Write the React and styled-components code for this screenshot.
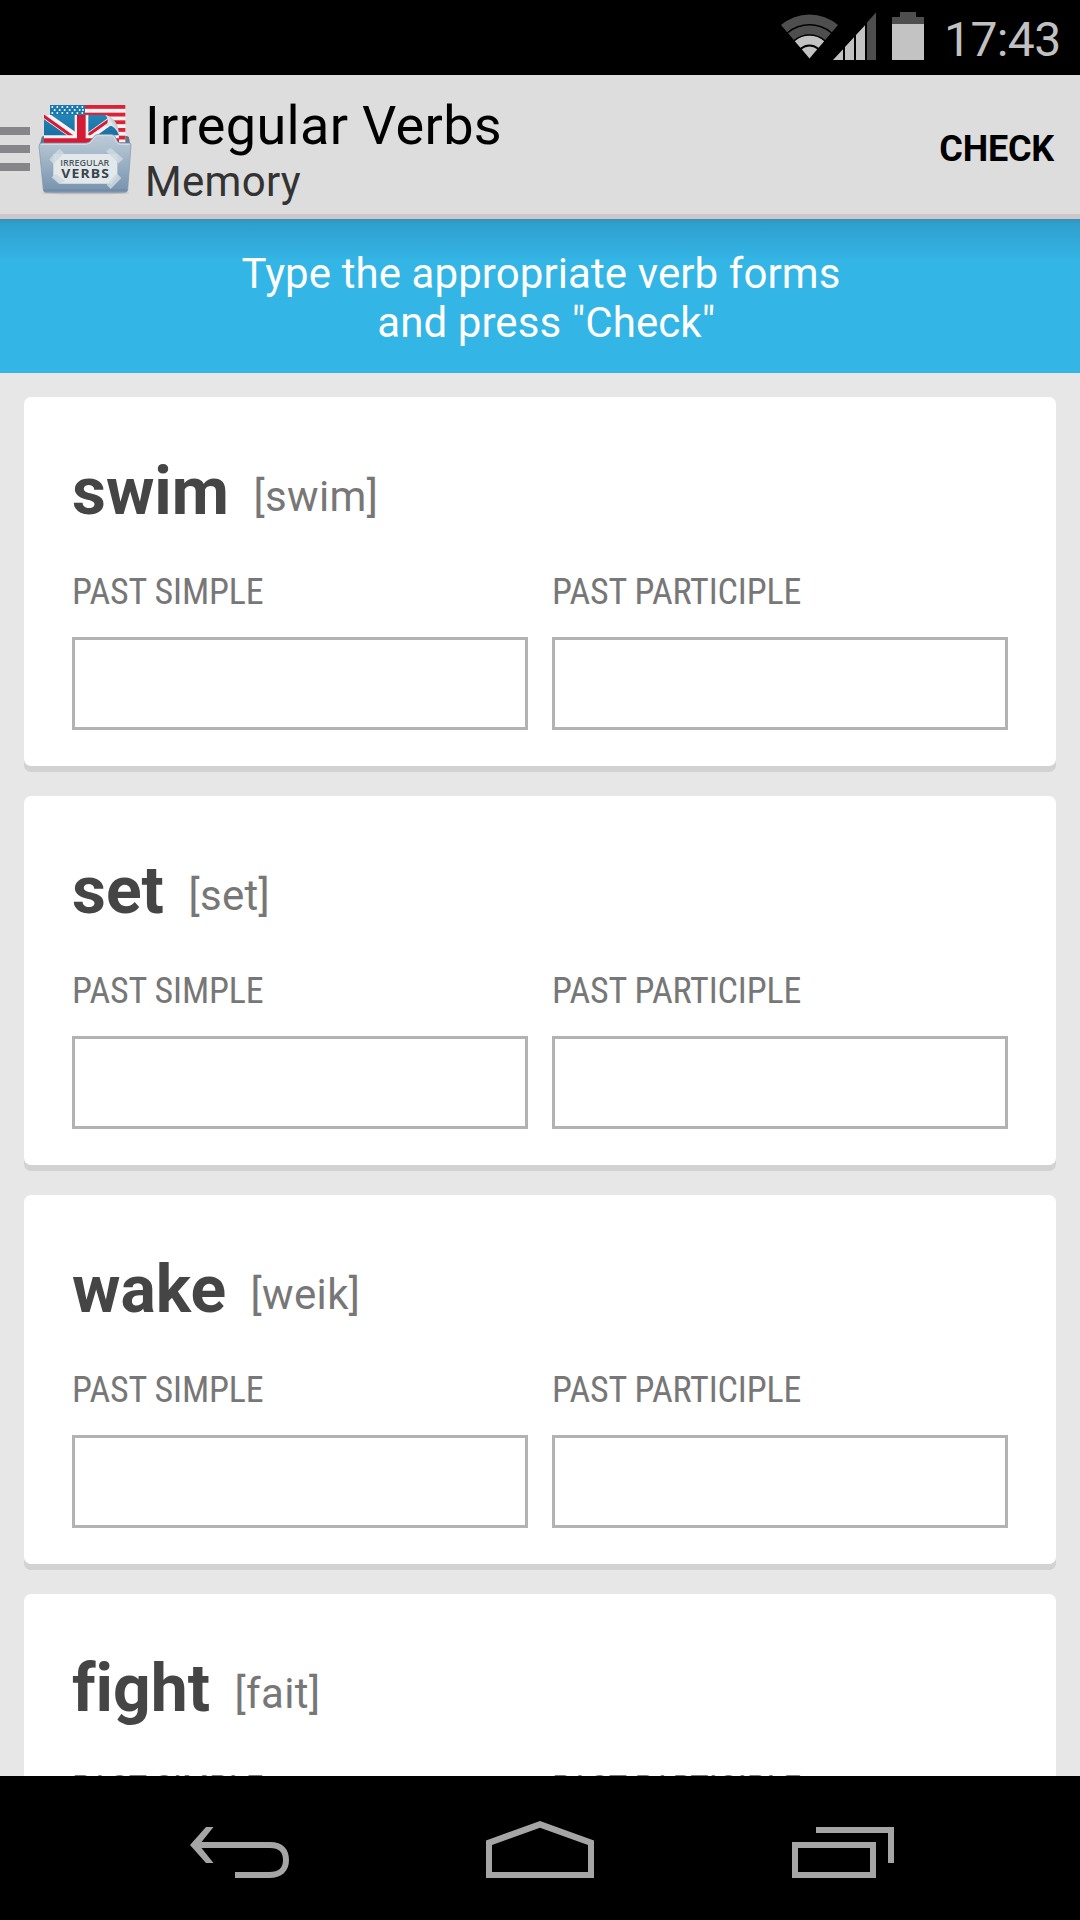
import React from "react";
import styled, { createGlobalStyle } from "styled-components";

const GlobalStyle = createGlobalStyle`
  * { box-sizing: border-box; }
  body { margin: 0; background: #000; font-family: Roboto, "Noto Sans", sans-serif; font-variant-ligatures: none; }
`;

const Screen = styled.div`
  width: 1080px;
  height: 1920px;
  display: flex;
  flex-direction: column;
  overflow: hidden;
  background: #e7e7e7;
`;

const StatusBar = styled.div`
  flex: none;
  height: 75px;
  background: #000;
  display: flex;
  justify-content: flex-end;
  padding: 12px 20px 0 0;
`;

const StatusIcons = styled.svg`
  display: block;
  width: 144px;
  height: 49px;
  margin-right: 20px;
`;

const Clock = styled.div`
  width: 116px;
  white-space: nowrap;
  font-size: 48px;
  line-height: 56px;
  color: #c1c1c1;
  letter-spacing: -0.6px;
`;

const ActionBar = styled.header`
  flex: none;
  height: 144px;
  display: flex;
  background: #dddddd;
  border-bottom: 5px solid #cbc7cb;
`;

const MenuLines = styled.div`
  width: 30px;
  padding-top: 52px;
  display: flex;
  flex-direction: column;
  gap: 10px;
`;

const MenuLine = styled.div`
  height: 8px;
  background: #86868a;
`;

const Logo = styled.svg`
  display: block;
  width: 98px;
  height: 96px;
  margin: 27px 0 0 6px;
`;

const Titles = styled.div`
  flex: 1;
  padding: 19px 0 0 11px;
`;

const Title = styled.div`
  font-size: 54px;
  line-height: 63px;
  color: #000;
  letter-spacing: 0.33px;
`;

const Subtitle = styled.div`
  font-size: 42px;
  line-height: 49px;
  color: #333;
  letter-spacing: 0.3px;
`;

const CheckButton = styled.button`
  border: 0;
  padding: 9px 26px 0 0;
  background: none;
  font: bold 36px/42px Roboto, sans-serif;
  letter-spacing: -0.2px;
  color: #000;
`;

const Banner = styled.div`
  flex: none;
  height: 154px;
  padding: 30px 0 0 2px;
  text-align: center;
  white-space: pre;
  font-size: 42px;
  line-height: 49px;
  letter-spacing: 0.09px;
  color: #fff;
  background: linear-gradient(#3a8fb0 0, #2f9fcd 4px, #31a7d7 18px, #33b5e5 42px);
`;

const CardList = styled.main`
  flex: 1;
  min-height: 0;
  overflow: hidden;
  padding: 24px 24px 0;
  display: flex;
  flex-direction: column;
  gap: 30px;
`;

const Card = styled.section`
  flex: none;
  height: 369px;
  padding: 56px 48px 0;
  background: #fff;
  border-radius: 7px;
  box-shadow: 0 6px 0 #d2d2d2;
`;

const VerbRow = styled.div`
  height: 77px;
  display: flex;
`;

const Verb = styled.div`
  font-size: 66px;
  font-weight: 700;
  line-height: 77px;
  color: #454545;
`;

const Phonetic = styled.div`
  padding: 19px 0 0 24.5px;
  font-size: 42px;
  line-height: 49px;
  letter-spacing: 0.35px;
  color: #777;
`;

const Fields = styled.div`
  display: grid;
  grid-template-columns: 1fr 1fr;
  column-gap: 24px;
  margin-top: 41px;
`;

const Field = styled.label`
  display: flex;
  flex-direction: column;
  gap: 24px;
`;

const FieldName = styled.span`
  font-family: "Roboto Condensed", Roboto, sans-serif;
  font-stretch: 75%;
  font-size: 36px;
  line-height: 42px;
  letter-spacing: -0.14px;
  color: #777;
`;

const FieldInput = styled.input`
  width: 100%;
  height: 93px;
  border: 3px solid #b2b2b2;
  border-radius: 0;
  background: #fff;
  padding: 0 12px;
  font: 42px Roboto, sans-serif;
`;

const NavBar = styled.nav`
  flex: none;
  height: 144px;
  background: #000;
  display: flex;
  justify-content: space-between;
  padding: 42px 186px 0 186px;
`;

const NavIcon = styled.svg`
  display: block;
  width: 108px;
  height: 66px;
`;

const verbs = [
  ["swim", "[swim]"],
  ["set", "[set]"],
  ["wake", "[weik]"],
  ["fight", "[fait]"],
];

function band(r1, r2) {
  const s = 0.648;
  const c = 0.762;
  const x = 809.5;
  const y = 58.5;
  return `M${x - r1 * s} ${y - r1 * c}A${r1} ${r1} 0 0 1 ${x + r1 * s} ${y - r1 * c}L${x + r2 * s} ${y - r2 * c}A${r2 || 1} ${r2 || 1} 0 0 0 ${x - r2 * s} ${y - r2 * c}Z`;
}

function AppLogo() {
  const stars = [];
  for (let r = 0; r < 3; r++)
    for (let c = 0; c < 7; c++)
      stars.push(<circle key={`${r}-${c}`} cx={157 + c * 15 + (r % 2) * 7 - (c === 6 && r % 2 ? 5 : 0)} cy={111 + r * 9} r="3" fill="#eef6fb" />);
  return (
    <Logo viewBox="108 96 294 288">
      <defs>
        <linearGradient id="front" x1="0" y1="0" x2="0" y2="1">
          <stop offset="0" stopColor="#bccbd8" />
          <stop offset=".3" stopColor="#abbccc" />
          <stop offset=".7" stopColor="#8ba4bb" />
          <stop offset="1" stopColor="#7892ad" />
        </linearGradient>
        <linearGradient id="blue" x1="0" y1="0" x2="0" y2="1">
          <stop offset="0" stopColor="#2187b8" />
          <stop offset="1" stopColor="#1b6496" />
        </linearGradient>
        <linearGradient id="curl" x1="0" y1="1" x2="1" y2="0">
          <stop offset="0" stopColor="#7d8b96" />
          <stop offset=".45" stopColor="#e9edf0" />
          <stop offset="1" stopColor="#8194a3" />
        </linearGradient>
        <clipPath id="uk"><path d="M132 134H316Q352 150 357 196V222H132Z" /></clipPath>
      </defs>
      <ellipse cx="256" cy="369" rx="132" ry="4" fill="#bdbdbd" />
      <path d="M124 206Q124 198 132 198H380Q387 198 388 208L391 226H119Z" fill="#62778e" />
      <rect x="150" y="105" width="226" height="112" fill="#f7f1f1" />
      {[0, 1, 2, 3, 4].map((i) => (
        <rect key={i} x="150" y={105 + i * 23} width="226" height="11.5" fill="#dc2237" />
      ))}
      <rect x="150" y="105" width="105" height="40" fill="#1b78ac" />
      {stars}
      <g clipPath="url(#uk)">
        <rect x="132" y="133" width="226" height="90" fill="url(#blue)" />
        <path d="M132 134L222 197M358 134L266 200" stroke="#f6f2f3" strokeWidth="23" strokeLinecap="square" />
        <path d="M132 139L214 197M362 126L262 197" stroke="#d51b33" strokeWidth="9" strokeLinecap="square" />
        <path d="M224 133H265V223H224ZM132 196H358V223H132Z" fill="#f6f2f3" />
        <path d="M231 133H257V223H231ZM132 205H358V223H132Z" fill="#d51b33" />
      </g>
      <path d="M316 134Q330 150 318 167Q345 162 357 196Q356 146 316 134Z" fill="url(#curl)" />
      <path d="M126 219H258Q268 219 274 210L281 200Q286 193 296 193H334Q343 193 346 201L352 213Q355 219 363 219H386Q394 219 393 227L383 360Q382 367 375 367H137Q131 367 130 360L117 228Q117 219 126 219Z" fill="url(#front)" stroke="#7d94aa" strokeWidth="2" />
      <path d="M122 223H260Q271 222 278 211L284 202Q288 197 297 197H332Q340 197 343 204L349 216Q353 223 362 223H389" fill="none" stroke="#d6e0e8" strokeWidth="3" />
      <path d="M131 360H382" stroke="#67819c" strokeWidth="2" />
      <path d="M160 252H352V320L334 341H182L160 320Z" fill="#e3e9eb" />
      <path d="M148 268L178 236L192 250L160 282ZM318 244L332 234L370 266L356 280ZM154 322L168 312L196 334L178 343ZM320 344L350 310L364 324L332 357Z" fill="#cdd9e0" opacity=".85" />
      <text x="181" y="288" textLength="147" lengthAdjust="spacingAndGlyphs" fontFamily="Open Sans" fontWeight="600" fontSize="25" fill="#4d565e">IRREGULAR</text>
      <text x="184" y="325" textLength="146" lengthAdjust="spacingAndGlyphs" letterSpacing="3" fontFamily="Open Sans" fontWeight="700" fontSize="38" fill="#39434d">VERBS</text>
    </Logo>
  );
}

export default function App() {
  return (
    <>
      <GlobalStyle />
      <Screen>
        <StatusBar>
          <StatusIcons viewBox="780 12 144 49">
            <path d={band(44, 34.5)} fill="#4e4e4e" />
            <path d={band(33, 24.2)} fill="#4e4e4e" />
            <path d={band(22.7, 14)} fill="#c3c3c3" />
            <path d={band(12, 0)} fill="#c3c3c3" />
            <path d="M833 60L843 49.3V60ZM845 60V47L854 37.3V60ZM856 60V35L865 25.3V60Z" fill="#c3c3c3" />
            <path d="M867 60V22.5L876 12.5V60Z" fill="#4e4e4e" />
            <path d="M900 12H916V17H924V24H892V17H900Z" fill="#4e4e4e" />
            <path d="M892 24H924V60H892Z" fill="#c3c3c3" />
          </StatusIcons>
          <Clock>17:43</Clock>
        </StatusBar>
        <ActionBar>
          <MenuLines>
            <MenuLine />
            <MenuLine />
            <MenuLine />
          </MenuLines>
          <AppLogo />
          <Titles>
            <Title>Irregular Verbs</Title>
            <Subtitle>Memory</Subtitle>
          </Titles>
          <CheckButton>CHECK</CheckButton>
        </ActionBar>
        <Banner>{'Type the appropriate verb forms\n and press "Check"'}</Banner>
        <CardList>
          {verbs.map(([verb, sound]) => (
            <Card key={verb}>
              <VerbRow>
                <Verb>{verb}</Verb>
                <Phonetic>{sound}</Phonetic>
              </VerbRow>
              <Fields>
                {["PAST SIMPLE", "PAST PARTICIPLE"].map((name) => (
                  <Field key={name}>
                    <FieldName>{name}</FieldName>
                    <FieldInput />
                  </Field>
                ))}
              </Fields>
            </Card>
          ))}
        </CardList>
        <NavBar>
          <NavIcon viewBox="186 1818 108 66">
            <path d="M206 1827H213.5L201.5 1842H270C283 1842 289 1849 289 1860C289 1871 282 1878 269 1878H235V1872H269C279 1872 283 1868 283 1860C283 1852 279 1848 270 1848H201.500L213.500 1863H206L190 1845Z" fill="#a5a5a5" />
          </NavIcon>
          <NavIcon viewBox="486 1818 108 66">
            <path fillRule="evenodd" d="M540 1821L594 1840.500V1878H486V1840.500ZM540 1827.700L492 1845V1872H588V1845Z" fill="#a5a5a5" />
          </NavIcon>
          <NavIcon viewBox="786 1818 108 66">
            <path fillRule="evenodd" d="M816 1827H894V1863H888V1833H816ZM792 1842H876V1878H792ZM798 1848V1872H870V1848Z" fill="#a5a5a5" />
          </NavIcon>
        </NavBar>
      </Screen>
    </>
  );
}
